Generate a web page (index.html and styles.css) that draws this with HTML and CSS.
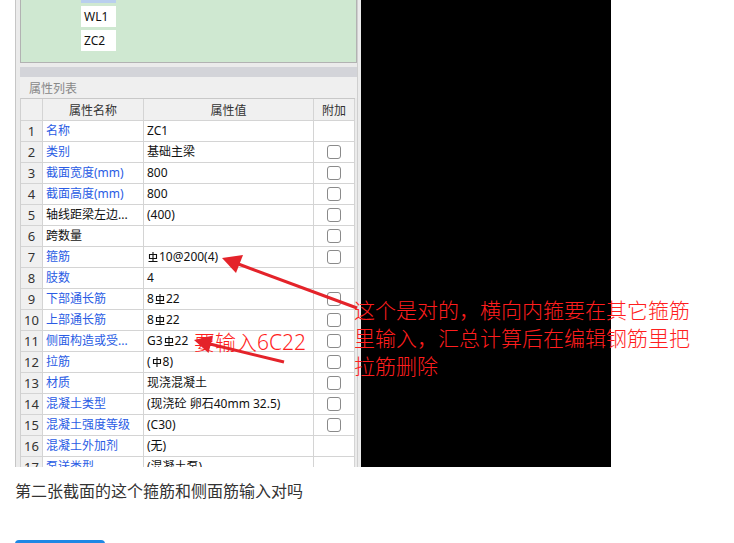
FILE: index.html
```html
<!DOCTYPE html>
<html lang="zh-CN">
<head>
<meta charset="utf-8">
<title>截图</title>
<link rel="stylesheet" href="styles.css">
</head>
<body>
<div class="shot">
  <div class="app">
    <div class="pane">
      <div class="tree">
        <div class="item sel"></div>
        <div class="item">WL1</div>
        <div class="item">ZC2</div>
      </div>
      <div class="gap"></div>
      <div class="bar"></div>
      <div class="ptitle">属性列表</div>
      <div class="grid">
        <div class="c hd"></div><div class="c hd ctr">属性名称</div><div class="c hd ctr">属性值</div><div class="c hd ctr">附加</div>

        <div class="c num">1</div><div class="c nm">名称</div><div class="c val">ZC1</div><div class="c ex"></div>
        <div class="c num">2</div><div class="c nm">类别</div><div class="c val">基础主梁</div><div class="c ex"><span class="cb"></span></div>
        <div class="c num">3</div><div class="c nm">截面宽度(mm)</div><div class="c val">800</div><div class="c ex"><span class="cb"></span></div>
        <div class="c num">4</div><div class="c nm">截面高度(mm)</div><div class="c val">800</div><div class="c ex"><span class="cb"></span></div>
        <div class="c num">5</div><div class="c nm blk">轴线距梁左边...</div><div class="c val">(400)</div><div class="c ex"><span class="cb"></span></div>
        <div class="c num">6</div><div class="c nm blk">跨数量</div><div class="c val"></div><div class="c ex"><span class="cb"></span></div>
        <div class="c num">7</div><div class="c nm">箍筋</div><div class="c val"><svg class="rb" viewBox="0 0 10 10"><path d="M5 0V9M1.5 2.5H8.5V6.5H1.5ZM0.5 9.5H9.5"/></svg>10@200(4)</div><div class="c ex"><span class="cb"></span></div>
        <div class="c num">8</div><div class="c nm">肢数</div><div class="c val">4</div><div class="c ex"></div>
        <div class="c num">9</div><div class="c nm">下部通长筋</div><div class="c val">8<svg class="rb" viewBox="0 0 10 10"><path d="M5 0V9M1.5 2.5H8.5V6.5H1.5ZM0.5 9.5H9.5"/></svg>22</div><div class="c ex"><span class="cb"></span></div>
        <div class="c num">10</div><div class="c nm">上部通长筋</div><div class="c val">8<svg class="rb" viewBox="0 0 10 10"><path d="M5 0V9M1.5 2.5H8.5V6.5H1.5ZM0.5 9.5H9.5"/></svg>22</div><div class="c ex"><span class="cb"></span></div>
        <div class="c num">11</div><div class="c nm">侧面构造或受...</div><div class="c val">G3<svg class="rb" viewBox="0 0 10 10"><path d="M5 0V9M1.5 2.5H8.5V6.5H1.5ZM0.5 9.5H9.5"/></svg>22</div><div class="c ex"><span class="cb"></span></div>
        <div class="c num">12</div><div class="c nm">拉筋</div><div class="c val">(<svg class="rb" viewBox="0 0 10 10"><path d="M5 0V10M1.5 2.5H8.5V6.5H1.5Z"/></svg>8)</div><div class="c ex"><span class="cb"></span></div>
        <div class="c num">13</div><div class="c nm">材质</div><div class="c val">现浇混凝土</div><div class="c ex"><span class="cb"></span></div>
        <div class="c num">14</div><div class="c nm">混凝土类型</div><div class="c val">(现浇砼 卵石40mm 32.5)</div><div class="c ex"><span class="cb"></span></div>
        <div class="c num">15</div><div class="c nm">混凝土强度等级</div><div class="c val">(C30)</div><div class="c ex"><span class="cb"></span></div>
        <div class="c num">16</div><div class="c nm">混凝土外加剂</div><div class="c val">(无)</div><div class="c ex"></div>
        <div class="c num">17</div><div class="c nm">泵送类型</div><div class="c val">(混凝土泵)</div><div class="c ex"></div>
      </div>
    </div>
  </div>
  <div class="black"></div>
  <div class="note">这个是对的，横向内箍要在其它箍筋<br>里输入，汇总计算后在编辑钢筋里把<br>拉筋删除</div>
  <div class="note2">要输入6C22</div>
  <svg class="arrows" width="719" height="467" viewBox="0 0 719 467">
    <line x1="342" y1="308" x2="222" y2="263.5" class="al"/>
    <polygon points="207,258 228,255 221,273" class="ah"/>
    <line x1="269" y1="362" x2="193" y2="343.5" class="al"/>
    <polygon points="179,340 198,335.5 193.5,353" class="ah"/>
  </svg>
</div>
<p class="question">第二张截面的这个箍筋和侧面筋输入对吗</p>
<button class="btn" type="button"></button>
</body>
</html>
```

FILE: styles.css
```css
html, body {
  margin: 0;
  padding: 0;
  background: #fff;
}
body {
  padding-left: 15px;
  font-family: "Noto Sans", "Noto Sans CJK SC", sans-serif;
  overflow: hidden;
}
.shot {
  position: relative;
  display: flex;
  height: 467px;
  width: 719px;
  overflow: hidden;
  background: #fff;
}
.app {
  flex: none;
  width: 346px;
  box-sizing: border-box;
  background: #ebebeb;
  border-left: 1px solid #c6c6c6;
  padding: 0 3px 0 4px;
}
.pane {
  width: 338px;
  box-sizing: border-box;
  border-right: 1px solid #cfcfcf;
  height: 100%;
}
.tree {
  height: 63px;
  box-sizing: border-box;
  background: #cfe8d1;
  border: 1px solid #b2b2b2;
  border-top: none;
  padding-left: 60px;
  display: flex;
  flex-direction: column;
  gap: 3px;
}
.item {
  width: 35px;
  height: 21px;
  flex: none;
  background: #fff;
  font-size: 12px;
  line-height: 21px;
  padding-left: 3px;
  box-sizing: border-box;
  color: #111;
}
.item.sel {
  margin-top: -18px;
  background: #b9cfee;
}
.gap {
  height: 4px;
}
.bar {
  height: 10px;
  background: #d3d4d9;
}
.ptitle {
  height: 21px;
  background: #efefef;
  font-size: 12px;
  line-height: 22px;
  color: #888;
  padding-left: 9px;
  font-family: "Noto Sans CJK SC", sans-serif;
}
.grid {
  display: grid;
  grid-template-columns: 22px 101px 170px 41px;
  width: 335px;
  box-sizing: border-box;
  border-left: 1px solid #d0d0d0;
  border-top: 1px solid #c8c8c8;
  background: #fff;
}
.c {
  box-sizing: border-box;
  height: 21px;
  border-right: 1px solid #d4d4d4;
  border-bottom: 1px solid #d4d4d4;
  font-size: 12px;
  line-height: 20px;
  white-space: nowrap;
  overflow: hidden;
  color: #111;
}
.hd {
  height: 22px;
  line-height: 21px;
  background: #f0f0f0;
  color: #333;
  font-family: "Noto Sans CJK SC", sans-serif;
}
.ctr {
  text-align: center;
}
.num {
  background: #f0f0f0;
  text-align: center;
  color: #333;
  font-size: 13px;
}
.nm {
  padding-left: 3px;
  color: #2a5ce4;
}
.nm.blk {
  color: #111;
}
.val {
  padding-left: 3px;
}
.ex {
  display: flex;
  align-items: center;
  justify-content: center;
}
.cb {
  width: 14px;
  height: 14px;
  box-sizing: border-box;
  border: 1px solid #8a8a8a;
  border-radius: 3px;
  background: #fff;
}
.rb {
  width: 10px;
  height: 10px;
  margin: 0 1px 0 1px;
  vertical-align: -1px;
  fill: none;
  stroke: #111;
  stroke-width: 1.1;
}
.black {
  flex: none;
  width: 250px;
  background: #000;
}
.note {
  position: absolute;
  left: 339px;
  top: 295px;
  font-family: "Noto Sans CJK SC", sans-serif;
  font-weight: 300;
  font-size: 21px;
  line-height: 28px;
  color: #ff1e1e;
  white-space: nowrap;
}
.note2 {
  position: absolute;
  left: 179px;
  top: 329px;
  font-family: "Noto Sans", "Noto Sans CJK SC", sans-serif;
  font-weight: 300;
  font-size: 21px;
  line-height: 26px;
  color: #ff1e1e;
  white-space: nowrap;
}
.arrows {
  position: absolute;
  left: 0;
  top: 0;
}
.al {
  stroke: #e4232a;
  stroke-width: 3;
}
.ah {
  fill: #e4232a;
}
.question {
  margin: 11px 0 0 0;
  font-family: "Noto Sans CJK SC", sans-serif;
  font-size: 16px;
  line-height: 24px;
  color: #333;
}
.btn {
  display: block;
  margin-top: 38px;
  width: 90px;
  height: 32px;
  border: none;
  border-radius: 4px;
  background: #1e88e5;
  padding: 0;
}
```
